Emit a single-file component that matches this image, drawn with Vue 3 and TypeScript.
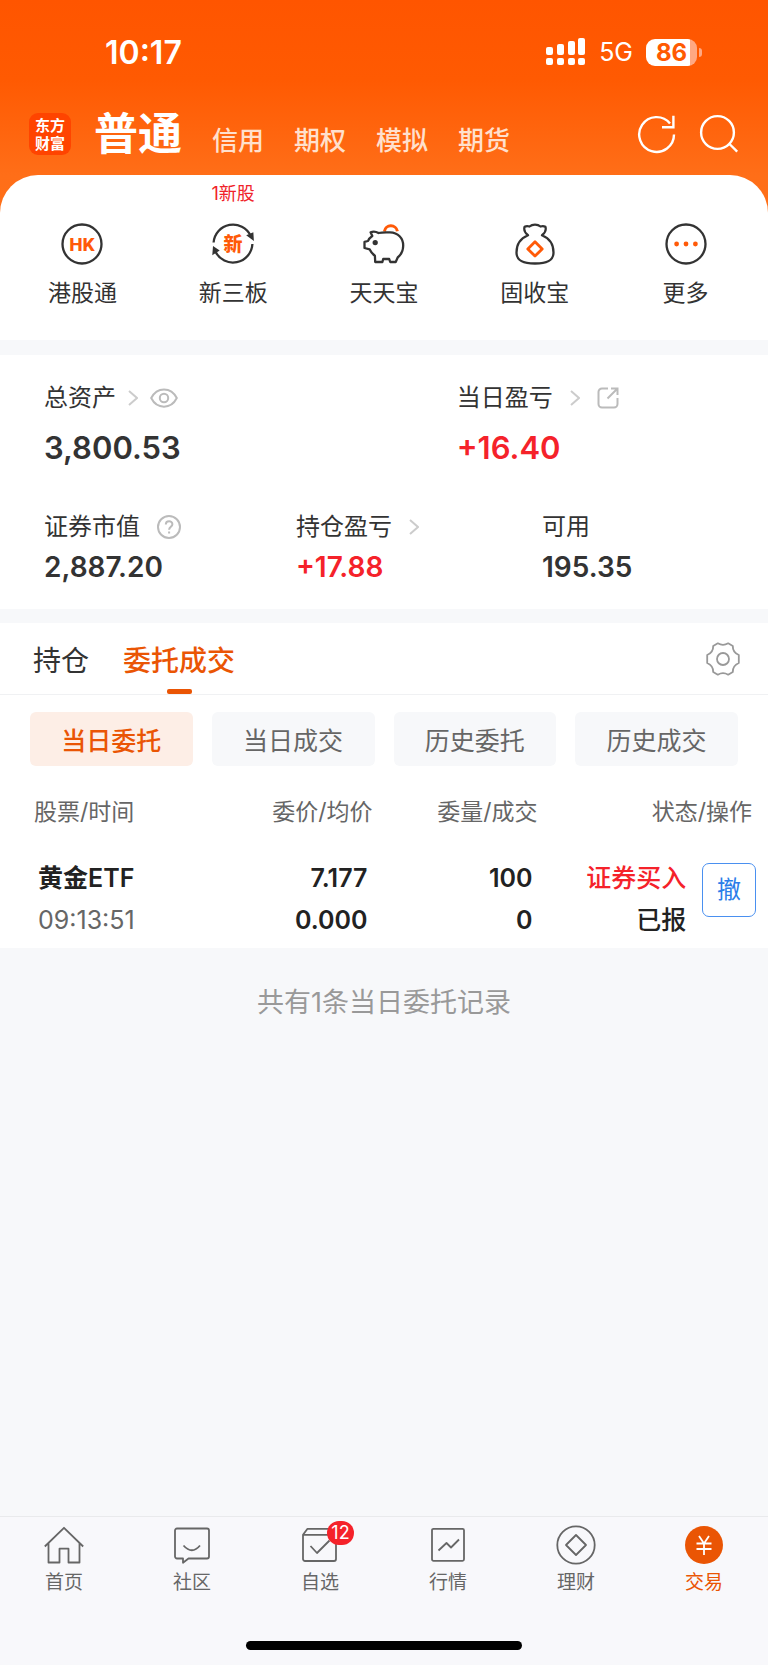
<script setup lang="ts">
import { ref } from 'vue'

interface Shortcut { id: string; label: string; note?: string }
interface Order { name: string; time: string; price: string; avg: string; qty: string; filled: string; side: string; status: string }
interface TabItem { id: string; label: string; badge?: number }

const accounts: string[] = ['普通', '信用', '期权', '模拟', '期货']
const account = ref('普通')

const shortcuts: Shortcut[] = [
  { id: 'hk', label: '港股通' },
  { id: 'neeq', label: '新三板', note: '1新股' },
  { id: 'pig', label: '天天宝' },
  { id: 'bag', label: '固收宝' },
  { id: 'more', label: '更多' },
]

const views: string[] = ['持仓', '委托成交']
const view = ref('委托成交')

const filters: string[] = ['当日委托', '当日成交', '历史委托', '历史成交']
const filter = ref('当日委托')

const orders = ref<Order[]>([
  { name: '黄金ETF', time: '09:13:51', price: '7.177', avg: '0.000', qty: '100', filled: '0', side: '证券买入', status: '已报' },
])

const tabs: TabItem[] = [
  { id: 'home', label: '首页' },
  { id: 'social', label: '社区' },
  { id: 'watch', label: '自选', badge: 12 },
  { id: 'market', label: '行情' },
  { id: 'wealth', label: '理财' },
  { id: 'trade', label: '交易' },
]
const tab = ref('trade')
</script>

<template>
  <div class="app">
    <div class="top">
      <div class="status">
        <span class="clock">10:17</span>
        <div class="status-right">
          <svg class="signal" viewBox="0 0 40 28" fill="#fff" aria-hidden="true">
            <rect x="0" y="9" width="7" height="8" rx="2" /><rect x="11" y="6" width="7" height="11" rx="2" />
            <rect x="22" y="3" width="7" height="14" rx="2" /><rect x="32" y="0" width="7" height="17" rx="2" />
            <rect x="0" y="20" width="7" height="7" rx="2" /><rect x="11" y="20" width="7" height="7" rx="2" />
            <rect x="22" y="20" width="7" height="7" rx="2" /><rect x="32" y="20" width="7" height="7" rx="2" />
          </svg>
          <span class="network">5G</span>
          <span class="battery"><span class="level">86</span></span>
        </div>
      </div>

      <header class="nav">
        <div class="logo">东方<br />财富</div>
        <nav class="accounts">
          <button v-for="a in accounts" :key="a" type="button" :class="{ active: a === account }" @click="account = a">{{ a }}</button>
        </nav>
        <button class="nav-icon" type="button" aria-label="刷新">
          <svg viewBox="0 0 40 40" fill="none" stroke="#fff" stroke-width="2.4">
            <path d="M37 20.5A17.4 17.4 0 1 1 33 9.4" /><path d="M36.4 1.800v11.400H25" />
          </svg>
        </button>
        <button class="nav-icon" type="button" aria-label="搜索">
          <svg viewBox="0 0 40 40" fill="none" stroke="#fff" stroke-width="2.4">
            <circle cx="18.5" cy="18.5" r="16.4" /><path d="M30 29.500l8.200 8.200" />
          </svg>
        </button>
      </header>

      <section class="shortcuts">
        <button v-for="s in shortcuts" :key="s.id" type="button" class="shortcut">
          <span class="note">{{ s.note }}</span>
          <svg viewBox="0 0 42 42" fill="none" stroke="#333" stroke-width="2.3" aria-hidden="true">
            <template v-if="s.id === 'hk'">
              <circle cx="21" cy="21" r="19.500" />
              <text x="21" y="28" class="glyph hk">HK</text>
            </template>
            <template v-else-if="s.id === 'neeq'">
              <path d="M1.600 19.500A19.500 19.500 0 0 1 38.600 12.600" /><path d="M40.400 21A19.500 19.500 0 0 1 3.400 28.600" />
              <path d="M36.500 12.500l3.800-1.600.3 4.600z" fill="#333" /><path d="M1.600 30l.4-5 3.600 2.400z" fill="#333" />
              <text x="21" y="28" class="glyph neeq">新</text>
            </template>
            <template v-else-if="s.id === 'pig'">
              <path d="M21.400 8.400a6.600 6.600 0 0 1 13-.2" stroke="#ff5a08" stroke-width="3" />
              <path d="M7.600 9.200q4-1.600 7.900.8Q20 9 27 9.400c8 .3 13.200 5.600 13.200 13.100 0 5.500-2.500 9.500-5.500 12l-2 4.500h-5.500l-1-3h-6l-.8 3h-7.200l-.3-6.200Q8.800 30.600 6.700 26.400L1.500 25v-6.200l3.500-.8q.8-2.600 4.300-5z" stroke-linejoin="round" />
              <circle cx="12.200" cy="19.600" r="1.500" fill="#333" />
            </template>
            <template v-else-if="s.id === 'bag'">
              <path d="M14 12.300C11.500 10.500 9.500 7 10.600 3.800q2.200-1.300 4.900-.3 2.200-1.900 5.500-1.900t5.500 1.900q2.700-1 4.900.3C32.500 7 30.500 10.500 28 12.300c6.500 2.700 11.500 8.700 11.500 17.200 0 8-6 11-18.500 11s-18.500-3-18.500-11C2.500 21 7.500 15 14 12.300z" stroke-linejoin="round" />
              <path d="M21 18.700l7.200 7.200-7.200 7.200-7.200-7.200z" stroke="#ff5a08" stroke-width="2.800" stroke-linejoin="round" />
            </template>
            <template v-else>
              <circle cx="21" cy="21" r="19.500" />
              <g fill="#ff5a08" stroke="none"><circle cx="11.600" cy="21" r="2.400" /><circle cx="21" cy="21" r="2.400" /><circle cx="30.400" cy="21" r="2.400" /></g>
            </template>
          </svg>
          <span class="shortcut-label">{{ s.label }}</span>
        </button>
      </section>
    </div>

    <section class="assets">
      <div class="asset-row primary">
        <div>
          <div class="asset-label tight">
            <span>总资产</span>
            <svg class="chevron" viewBox="0 0 10 16"><path d="M1 1l8 7-8 7" /></svg>
            <button class="mini eye" type="button" aria-label="隐藏金额">
              <svg viewBox="0 0 28 20"><path d="M1.200 10C7 -1.500 21 -1.500 26.800 10 21 21.500 7 21.500 1.200 10z" /><circle cx="14" cy="10" r="4.200" /></svg>
            </button>
          </div>
          <div class="amount">3,800.53</div>
        </div>
        <div>
          <div class="asset-label">
            <span>当日盈亏</span>
            <svg class="chevron" viewBox="0 0 10 16"><path d="M1 1l8 7-8 7" /></svg>
            <button class="mini share" type="button" aria-label="分享">
              <svg viewBox="0 0 22 22"><path d="M11 1.500H5a3.500 3.500 0 0 0-3.500 3.500v12A3.500 3.500 0 0 0 5 20.500h12a3.500 3.500 0 0 0 3.500-3.500v-6M14 1.500h6.500V8M20 2l-9.500 9.500" /></svg>
            </button>
          </div>
          <div class="amount up">+16.40</div>
        </div>
      </div>
      <div class="asset-row secondary">
        <div>
          <div class="asset-label">
            <span>证券市值</span>
            <button class="mini help" type="button" aria-label="说明">
              <svg viewBox="0 0 24 24"><circle cx="12" cy="12" r="11" /><path d="M8.800 9.500c0-4.300 6.600-4.300 6.600-.3 0 2.500-3.300 2.700-3.300 5.600M12.100 16.600v1.800" /></svg>
            </button>
          </div>
          <div class="amount">2,887.20</div>
        </div>
        <div>
          <div class="asset-label">
            <span>持仓盈亏</span>
            <svg class="chevron" viewBox="0 0 10 16"><path d="M1 1l8 7-8 7" /></svg>
          </div>
          <div class="amount up">+17.88</div>
        </div>
        <div>
          <div class="asset-label"><span>可用</span></div>
          <div class="amount">195.35</div>
        </div>
      </div>
    </section>

    <section class="orders">
      <div class="views">
        <button v-for="v in views" :key="v" type="button" class="view" :class="{ active: v === view }" @click="view = v">{{ v }}</button>
        <button class="gear" type="button" aria-label="设置">
          <svg viewBox="0 0 34 34" fill="none" stroke="#999" stroke-width="1.800" stroke-linejoin="round">
            <path d="M11.800 1.300Q17 4.300 22.200 1.300L26.800 4Q26.600 10.300 32.800 13V21Q26.600 23.700 26.800 30L22.200 32.700Q17 29.700 11.800 32.700L7.200 30Q7.400 23.700 1.200 21V13Q7.400 10.300 7.200 4Z" />
            <circle cx="17" cy="17" r="6" />
          </svg>
        </button>
      </div>

      <div class="filters">
        <button v-for="f in filters" :key="f" type="button" :class="{ active: f === filter }" @click="filter = f">{{ f }}</button>
      </div>

      <table>
        <colgroup><col class="c-name" /><col class="c-qty" /><col class="c-side" /><col class="c-action" /></colgroup>
        <thead>
          <tr>
            <th scope="col"><div class="pair"><span>股票/时间</span><span>委价/均价</span></div></th>
            <th scope="col">委量/成交</th>
            <th scope="col" colspan="2" class="last">状态/操作</th>
          </tr>
        </thead>
        <tbody>
          <tr v-for="o in orders" :key="o.time">
            <td>
              <div class="pair"><span>{{ o.name }}</span><span>{{ o.price }}</span></div>
              <div class="pair"><span class="time">{{ o.time }}</span><span>{{ o.avg }}</span></div>
            </td>
            <td><div>{{ o.qty }}</div><div>{{ o.filled }}</div></td>
            <td class="state"><div class="side">{{ o.side }}</div><div>{{ o.status }}</div></td>
            <td class="action"><button type="button">撤</button></td>
          </tr>
        </tbody>
      </table>
    </section>

    <p class="summary">共有1条当日委托记录</p>

    <footer class="bottom">
      <nav class="tabs">
        <button v-for="t in tabs" :key="t.id" type="button" class="tab" :class="{ active: t.id === tab }" @click="tab = t.id">
          <span class="tab-icon">
            <svg viewBox="0 0 40 40" fill="none" stroke="#666" stroke-width="1.800" stroke-linejoin="round" aria-hidden="true">
              <path v-if="t.id === 'home'" d="M.8 21.500L20 2.800l19.200 18.700M4.500 18v19.500h11V23.700h9v13.800h11V18" />
              <template v-else-if="t.id === 'social'">
                <path d="M5 3.500h30a2 2 0 0 1 2 2v26a2 2 0 0 1-2 2H16.500l-5.500 4.200v-4.200H5a2 2 0 0 1-2-2v-26a2 2 0 0 1 2-2z" /><path d="M11.500 20.500q8.500 9.500 16.500 0" />
              </template>
              <template v-else-if="t.id === 'watch'">
                <path d="M3 9.800L7.500 3.800H34a2 2 0 0 1 2 2V34a2 2 0 0 1-2 2H5a2 2 0 0 1-2-2zM3 9.800h33" /><path d="M10.500 21l6.500 7 12.500-12.500" />
              </template>
              <template v-else-if="t.id === 'market'">
                <rect x="4" y="3.800" width="32" height="32" rx="1.500" /><path d="M10.500 25.500l8-7.500 4.500 4.500 8-8" />
              </template>
              <template v-else-if="t.id === 'wealth'">
                <circle cx="20" cy="20" r="18.700" /><path d="M20 10l10 10-10 10-10-10z" />
              </template>
              <template v-else>
                <circle cx="20" cy="20" r="19" fill="#ea5504" stroke="none" />
                <path d="M15 11l5 7.500 5-7.500M20 18.500V30M12.500 18.500h15M12.500 24h15" stroke="#fff" />
              </template>
            </svg>
            <span v-if="t.badge" class="badge">{{ t.badge }}</span>
          </span>
          <span class="tab-label">{{ t.label }}</span>
        </button>
      </nav>
      <div class="home-bar"></div>
    </footer>
  </div>
</template>

<style>
body { margin: 0; background: #f7f8fa; }
</style>

<style scoped>
.app {
  display: flex;
  flex-direction: column;
  min-height: 100vh;
  background: #f7f8fa;
  color: #333;
  font-family: Inter, "Noto Sans CJK SC", sans-serif;
}
button {
  margin: 0;
  padding: 0;
  border: 0;
  background: none;
  color: inherit;
  font: inherit;
  cursor: pointer;
}
svg { display: block; }

.top { background: linear-gradient(#ff5500, #ff5a02 80px, #ff6e18 175px, #ff7018 215px); }
.status {
  display: flex;
  align-items: center;
  justify-content: space-between;
  height: 104px;
  padding: 0 65px 0 105px;
  color: #fff;
}
.clock { font-size: 32px; font-weight: 600; }
.status-right { display: flex; align-items: center; gap: 13px; }
.signal { width: 40px; height: 28px; }
.network { font-size: 25px; line-height: 30px; }
.battery {
  position: relative;
  width: 51px;
  height: 27px;
  margin-right: 6px;
  border-radius: 9px;
  background: linear-gradient(to right, #fff 86%, #ffa883 86%);
}
.battery::after {
  content: "";
  position: absolute;
  left: 53px;
  top: 9px;
  width: 3px;
  height: 9px;
  border-radius: 0 4px 4px 0;
  background: #ffa883;
}
.level {
  display: block;
  color: #ff5a02;
  font-size: 24px;
  font-weight: 700;
  line-height: 27px;
  text-align: center;
}

.nav {
  display: flex;
  align-items: center;
  height: 60px;
  padding: 0 29px 11px;
}
.logo {
  box-sizing: border-box;
  width: 42px;
  height: 42px;
  padding-top: 3px;
  border-radius: 9px;
  background: #ff4400;
  color: #fff;
  font-family: "Noto Sans CJK SC", sans-serif;
  font-size: 15px;
  font-weight: 700;
  line-height: 18px;
  text-align: center;
}
.accounts {
  display: flex;
  flex: 1;
  align-items: baseline;
  gap: 30px;
  margin-left: 23px;
  padding-top: 6px;
  color: #ffe0cd;
  font-size: 26px;
  font-weight: 500;
  line-height: 54px;
}
.accounts .active { color: #fff; font-size: 44px; font-weight: 700; }
.nav-icon { width: 40px; height: 40px; margin-left: 22px; }

.shortcuts {
  display: grid;
  grid-template-columns: repeat(5, 1fr);
  padding: 7px 7px 32px;
  border-radius: 38px 38px 0 0;
  background: #fff;
}
.shortcut { display: flex; flex-direction: column; align-items: center; }
.shortcut svg { width: 42px; height: 42px; margin-top: 17px; }
.note { height: 24px; color: #f0222a; font-size: 18px; line-height: 24px; }
.shortcut-label { margin-top: 13px; font-size: 23px; line-height: 30px; }
.glyph { fill: #ff5a08; stroke: none; text-anchor: middle; font-weight: 800; }
.hk { font-family: Roboto, sans-serif; font-size: 19px; }
.neeq { font-size: 19px; }

.assets { margin-top: 15px; padding: 26px 0 24px 44px; background: #fff; }
.asset-row { display: grid; }
.primary { grid-template-columns: 57fr 43fr; }
.secondary { grid-template-columns: 252fr 246fr 226fr; margin-top: 42px; }
.asset-label {
  display: flex;
  align-items: center;
  gap: 17px;
  font-size: 24px;
  line-height: 34px;
}
.asset-label.tight { gap: 12px; }
.asset-label svg { fill: none; stroke: #bbb; stroke-width: 2; }
.asset-label .chevron { width: 10px; height: 16px; stroke: #ccc; }
.mini svg { width: 100%; height: 100%; }
.eye { width: 28px; height: 20px; }
.share { width: 22px; height: 22px; }
.help { width: 24px; height: 24px; }
.amount { font-weight: 600; }
.primary .amount { margin-top: 13px; font-size: 31px; line-height: 40px; }
.secondary .amount { margin-top: 5px; font-size: 28px; line-height: 36px; }
.up { color: #f5222a; }

.orders { margin-top: 14px; background: #fff; }
.views {
  display: flex;
  align-items: center;
  gap: 34px;
  height: 71px;
  padding: 0 28px 0 33px;
  border-bottom: 1px solid #f0f1f3;
}
.view { position: relative; height: 100%; font-size: 28px; }
.view.active { color: #ea5504; font-weight: 500; }
.view.active::after {
  content: "";
  position: absolute;
  bottom: 0;
  left: calc(50% - 12px);
  width: 25px;
  height: 5px;
  border-radius: 2px;
  background: #ea5504;
}
.gear { width: 34px; height: 34px; margin-left: auto; }

.filters {
  display: grid;
  grid-template-columns: repeat(4, 1fr);
  gap: 19px;
  padding: 17px 30px 0;
}
.filters button {
  height: 54px;
  border-radius: 6px;
  background: #f7f8fa;
  color: #666;
  font-size: 25px;
}
.filters .active { background: #fdeee6; color: #ea5504; font-weight: 500; }

table { width: 100%; border-collapse: collapse; table-layout: fixed; }
.c-name { width: 48.5%; }
.c-qty { width: 21.5%; }
.c-side { width: 20%; }
.c-action { width: 10%; }
th {
  padding: 30px 0 13px;
  color: #666;
  font-size: 23px;
  font-weight: 400;
  line-height: 32px;
  text-align: right;
}
th:first-child { padding-left: 34px; }
th.last { padding-right: 16px; }
td {
  padding: 16px 5px 7px 0;
  color: #222;
  font-size: 25px;
  font-weight: 600;
  line-height: 42px;
  text-align: right;
  vertical-align: top;
}
td:first-child { padding-left: 38px; }
.pair { display: flex; justify-content: space-between; }
.time { color: #666; font-weight: 400; }
.state { font-weight: 500; }
.side { color: #f5222a; }
td.action { padding: 22px 12px 0 0; }
.action button {
  width: 54px;
  height: 54px;
  border: 1px solid #4a90f0;
  border-radius: 7px;
  color: #2b7de9;
  font-size: 24px;
  font-weight: 400;
  line-height: 34px;
}

.summary {
  margin: 36px 0 0;
  color: #999;
  font-size: 27px;
  line-height: 38px;
  text-align: center;
}

.bottom {
  margin-top: auto;
  padding-bottom: 15px;
  border-top: 1px solid #e9eaec;
  background: #f8f8fb;
}
.tabs { display: grid; grid-template-columns: repeat(6, 1fr); padding-top: 8px; }
.tab { display: flex; flex-direction: column; align-items: center; color: #666; }
.tab.active { color: #ea5504; }
.tab-icon { position: relative; width: 40px; height: 40px; }
.badge {
  position: absolute;
  top: -4px;
  left: 27px;
  width: 27px;
  height: 24px;
  border-radius: 12px;
  background: #f5222a;
  color: #fff;
  font-size: 18px;
  line-height: 24px;
  text-align: center;
}
.tab-label { margin-top: 5px; font-size: 19px; line-height: 26px; }
.home-bar {
  width: 36%;
  height: 9px;
  margin: 45px auto 0;
  border-radius: 5px;
  background: #000;
}
</style>
